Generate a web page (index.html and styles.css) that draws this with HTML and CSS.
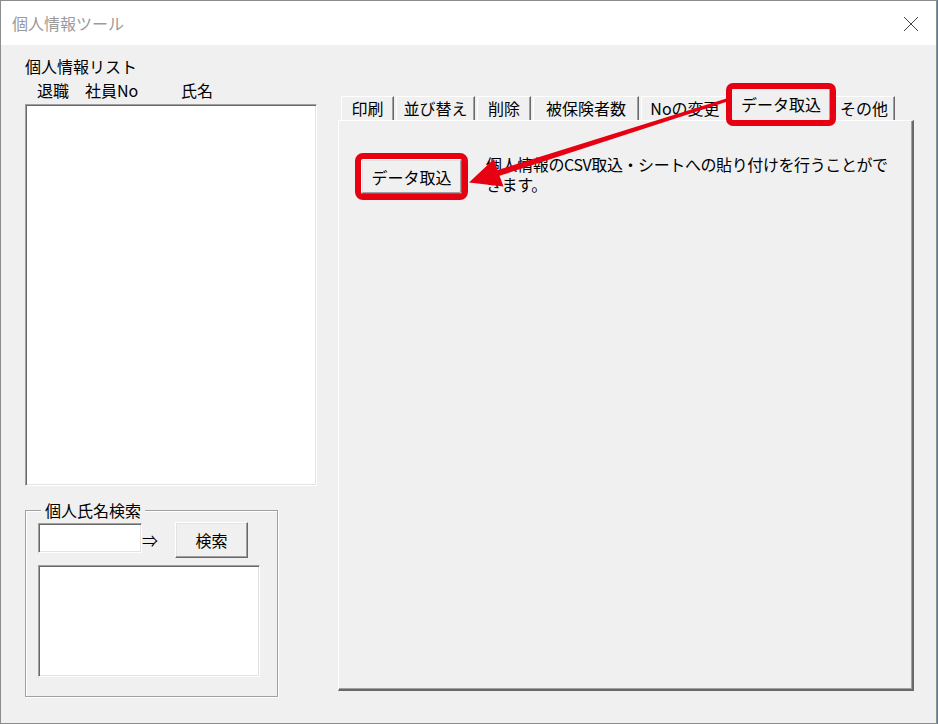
FILE: index.html
```html
<!DOCTYPE html>
<html lang="ja">
<head>
    <meta charset="UTF-8">
    <title>個人情報ツール</title>
    <link rel="stylesheet" href="styles.css">
</head>
<body>

<div class="window">
    <div class="titlebar">
        <span class="title">個人情報ツール</span>
        <svg class="close" width="16" height="16" viewBox="0 0 16 16">
            <path d="M1 1 L15 15 M15 1 L1 15" stroke="#444" stroke-width="1" fill="none"/>
        </svg>
    </div>

    <div class="client">
        <!-- Left: person list and search -->
        <div class="left">
            <div class="list-title">個人情報リスト</div>
            <div class="list-head">
                <span class="col-retire">退職</span>
                <span class="col-no">社員No</span>
                <span>氏名</span>
            </div>
            <div class="listbox main-list"></div>

            <fieldset class="search">
                <legend>個人氏名検索</legend>
                <div class="search-row">
                    <div class="textbox"></div>
                    <span class="arrow-mark">⇒</span>
                    <div class="btn search-btn">検索</div>
                </div>
                <div class="listbox result-list"></div>
            </fieldset>
        </div>

        <!-- Right: tab control -->
        <div class="right">
            <div class="tabs">
                <div class="tab tab-print">印刷</div>
                <div class="tab tab-sort">並び替え</div>
                <div class="tab tab-delete">削除</div>
                <div class="tab tab-insured">被保険者数</div>
                <div class="tab tab-number">Noの変更</div>
                <div class="tab tab-import selected highlight">データ取込</div>
                <div class="tab tab-other">その他</div>
            </div>
            <div class="panel">
                <div class="panel-row">
                    <div class="btn import-btn highlight">データ取込</div>
                    <p class="desc">個人情報のCSV取込・シートへの貼り付けを行うことがで<br>きます。</p>
                </div>
            </div>
        </div>
    </div>

    <!-- Callout arrow from the tab to the button -->
    <svg class="callout" width="938" height="724" viewBox="0 0 938 724">
        <polygon fill="#e60012" points="726.5,98.5 497.7,170 494,159 469,182.5 503.5,186.5 499.5,175.8 727.5,101.5"/>
    </svg>
</div>

</body>
</html>
```

FILE: styles.css
```css
/* Page */
body {
    margin: 0;
    background-color: #5b7bb0;
    font-family: "Noto Sans CJK JP", "Noto Sans", sans-serif;
    font-size: 16px;
    color: #000;
}

/* Window frame */
.window {
    position: relative;
    width: 935px;
    height: 722px;
    border: 1px solid #8c8c8c;
    background-color: #f0f0f0;
}

.titlebar {
    height: 44px;
    background-color: #fff;
    display: flex;
    align-items: center;
    justify-content: space-between;
    padding: 0 17px 0 11px;
}

.title {
    color: #9a9a9a;
    font-size: 16px;
    line-height: 20px;
}

.close {
    margin-top: 1px;
}

/* Client area */
.client {
    display: flex;
    padding-left: 24px;
    gap: 21px;
}

.left {
    width: 292px;
    display: flex;
    flex-direction: column;
}

.list-title {
    margin-top: 12px;
    line-height: 18px;
}

.list-head {
    display: flex;
    margin-top: 6px;
    padding-left: 12px;
    line-height: 18px;
}

.col-retire {
    width: 48px;
}

.col-no {
    width: 96px;
}

/* Sunken list / text boxes */
.listbox,
.textbox {
    background-color: #fff;
    border-top: 1px solid #a0a0a0;
    border-left: 1px solid #a0a0a0;
    border-right: 1px solid #fff;
    border-bottom: 1px solid #fff;
    box-shadow: inset 1px 1px 0 #696969, inset -1px -1px 0 #e3e3e3;
    box-sizing: border-box;
}

.main-list {
    margin-top: 5px;
    height: 382px;
}

/* Search frame */
.search {
    margin: 15px 0 0 0;
    width: 253px;
    box-sizing: border-box;
    border: 1px solid #a0a0a0;
    box-shadow: inset 1px 1px 0 #fff, 1px 1px 0 #fff;
    padding: 4px 0 19px 12px;
}

.search legend {
    margin-left: 3px;
    padding: 0 4px;
    line-height: 18px;
    background-color: #f0f0f0;
}

.search-row {
    display: flex;
    align-items: flex-start;
}

.textbox {
    width: 104px;
    height: 30px;
}

.arrow-mark {
    width: 33px;
    padding-top: 7px;
    line-height: 20px;
}

/* Raised buttons */
.btn {
    background-color: #f0f0f0;
    border-top: 1px solid #fff;
    border-left: 1px solid #fff;
    border-right: 1px solid #696969;
    border-bottom: 1px solid #696969;
    box-shadow: inset -1px -1px 0 #a0a0a0, inset 1px 1px 0 #e3e3e3;
    box-sizing: border-box;
    display: flex;
    align-items: center;
    justify-content: center;
}

.search-btn {
    width: 73px;
    height: 36px;
    margin-top: -1px;
}

.result-list {
    margin-top: 7px;
    width: 222px;
    height: 112px;
}

/* Tab control */
.right {
    width: 576px;
    display: flex;
    flex-direction: column;
}

.tabs {
    margin-top: 43px;
    height: 32px;
    display: flex;
    align-items: flex-end;
    padding-left: 3px;
    gap: 2px;
}

.tab {
    height: 24px;
    line-height: 23px;
    text-align: center;
    border-top: 1px solid #fff;
    border-left: 1px solid #fff;
    border-right: 1px solid #696969;
    box-shadow: inset -1px 0 0 #a0a0a0;
    box-sizing: border-box;
    background-color: #f0f0f0;
}

.tab-print { width: 53px; }
.tab-sort { width: 79px; }
.tab-delete { width: 54px; }
.tab-insured { width: 106px; }
.tab-number { width: 88px; }
.tab-import { width: 100px; }
.tab-other { width: 62px; }

.tab.selected {
    position: relative;
    z-index: 1;
    height: 33px;
    margin-bottom: -1px;
    line-height: 30px;
}

.panel {
    height: 571px;
    box-sizing: border-box;
    border-top: 1px solid #fff;
    border-left: 1px solid #fff;
    border-right: 2px solid #696969;
    border-bottom: 2px solid #696969;
    box-shadow: inset -1px -1px 0 #a0a0a0;
    padding: 38px 0 0 22px;
}

.panel-row {
    display: flex;
    align-items: flex-start;
}

.import-btn {
    width: 101px;
    height: 35px;
}

.desc {
    margin: -5px 0 0 24px;
    line-height: 20px;
    letter-spacing: -0.4px;
}

/* Red callout marks */
.highlight {
    outline: 6px solid #e60012;
    outline-offset: -1px;
    border-radius: 2px;
}

.import-btn.highlight {
    outline-offset: 0;
}

.callout {
    position: absolute;
    top: -1px;
    left: -1px;
    pointer-events: none;
    z-index: 2;
}
```
